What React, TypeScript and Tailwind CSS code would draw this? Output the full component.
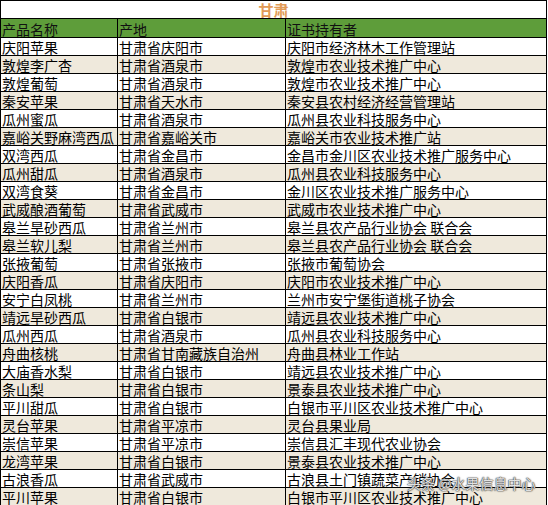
import React from "react";

const rows: [string, string, string][] = [
  ["庆阳苹果", "甘肃省庆阳市", "庆阳市经济林木工作管理站"],
  ["敦煌李广杏", "甘肃省酒泉市", "敦煌市农业技术推广中心"],
  ["敦煌葡萄", "甘肃省酒泉市", "敦煌市农业技术推广中心"],
  ["秦安苹果", "甘肃省天水市", "秦安县农村经济经营管理站"],
  ["瓜州蜜瓜", "甘肃省酒泉市", "瓜州县农业科技服务中心"],
  ["嘉峪关野麻湾西瓜", "甘肃省嘉峪关市", "嘉峪关市农业技术推广站"],
  ["双湾西瓜", "甘肃省金昌市", "金昌市金川区农业技术推广服务中心"],
  ["瓜州甜瓜", "甘肃省酒泉市", "瓜州县农业科技服务中心"],
  ["双湾食葵", "甘肃省金昌市", "金川区农业技术推广服务中心"],
  ["武威酿酒葡萄", "甘肃省武威市", "武威市农业技术推广中心"],
  ["皋兰旱砂西瓜", "甘肃省兰州市", "皋兰县农产品行业协会 联合会"],
  ["皋兰软儿梨", "甘肃省兰州市", "皋兰县农产品行业协会 联合会"],
  ["张掖葡萄", "甘肃省张掖市", "张掖市葡萄协会"],
  ["庆阳香瓜", "甘肃省庆阳市", "庆阳市农业技术推广中心"],
  ["安宁白凤桃", "甘肃省兰州市", "兰州市安宁堡街道桃子协会"],
  ["靖远旱砂西瓜", "甘肃省白银市", "靖远县农业技术推广中心"],
  ["瓜州西瓜", "甘肃省酒泉市", "瓜州县农业科技服务中心"],
  ["舟曲核桃", "甘肃省甘南藏族自治州", "舟曲县林业工作站"],
  ["大庙香水梨", "甘肃省白银市", "靖远县农业技术推广中心"],
  ["条山梨", "甘肃省白银市", "景泰县农业技术推广中心"],
  ["平川甜瓜", "甘肃省白银市", "白银市平川区农业技术推广中心"],
  ["灵台苹果", "甘肃省平凉市", "灵台县果业局"],
  ["崇信苹果", "甘肃省平凉市", "崇信县汇丰现代农业协会"],
  ["龙湾苹果", "甘肃省白银市", "景泰县农业技术推广中心"],
  ["古浪香瓜", "甘肃省武威市", "古浪县土门镇蔬菜产销协会"],
  ["平川苹果", "甘肃省白银市", "白银市平川区农业技术推广中心"],
];

const font = { fontFamily: '"Noto Sans CJK SC", "Noto Sans", sans-serif' };

export default function App() {
  return (
    <div className="relative w-[548px] h-[505px] overflow-hidden bg-white" style={font}>
      <div className="w-[547px] border-l border-t border-black">
        <div className="h-[18px] border-b border-r border-black flex items-center justify-center">
          <span className="text-[15px] font-bold leading-[16px] text-[#e29b57]">甘肃</span>
        </div>
        <div className="flex h-[19px] border-b border-black bg-[#5e9d3a] text-[14px] leading-[16px] text-[#111]">
          <div className="w-[117px] border-r border-black flex items-end pl-[1px]">产品名称</div>
          <div className="w-[168px] border-r border-black flex items-end pl-[1px]">产地</div>
          <div className="w-[261px] border-r border-black flex items-end pl-[1px]">证书持有者</div>
        </div>
        {rows.map((r, i) => (
          <div
            key={i}
            className={
              "flex h-[18px] border-b border-black text-[14px] leading-[16px] text-black " +
              (i % 2 === 1 ? "bg-[#efe9dc]" : "bg-white")
            }
          >
            <div className="w-[117px] border-r border-black flex items-end pl-[1px] whitespace-nowrap">{r[0]}</div>
            <div className="w-[168px] border-r border-black flex items-end pl-[1px] whitespace-nowrap">{r[1]}</div>
            <div className="w-[261px] border-r border-black flex items-end pl-[1px] whitespace-nowrap">{r[2]}</div>
          </div>
        ))}
      </div>
      <div
        className="absolute left-[407px] top-[475px] text-[14px] leading-[17px] text-white/85 whitespace-nowrap"
        style={{ textShadow: "0 0 1px #333, 0 0 1px #333, 0 0 2px #555" }}
      >
        头条 @水果信息中心
      </div>
    </div>
  );
}
